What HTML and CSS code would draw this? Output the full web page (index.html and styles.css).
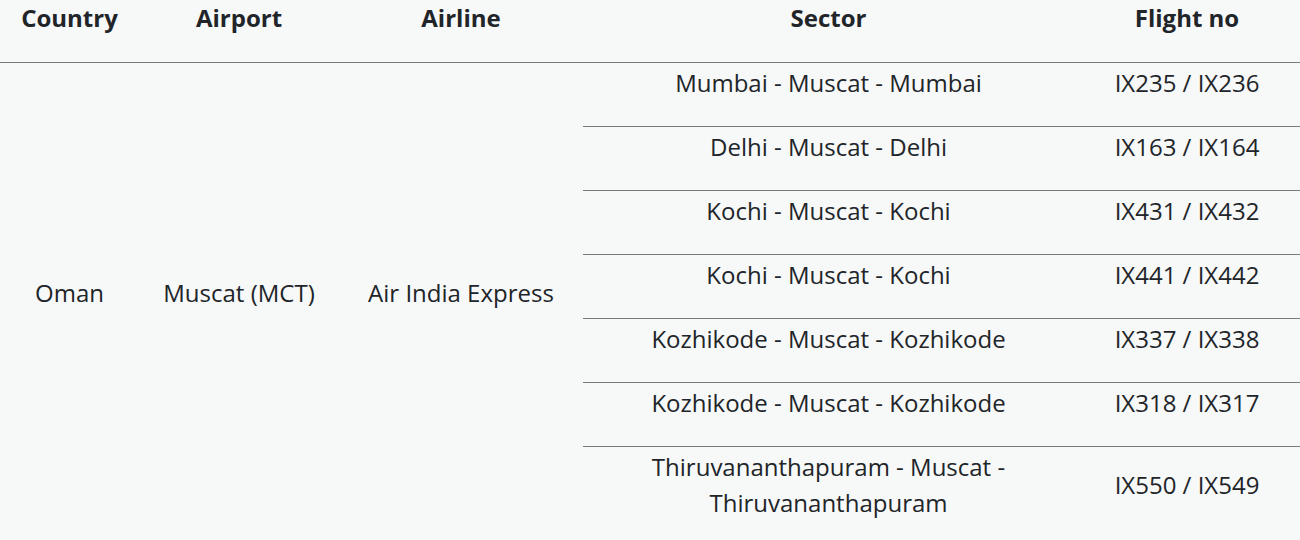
FILE: index.html
```html
<!DOCTYPE html>
<html>
<head>
<meta charset="utf-8">
<link rel="stylesheet" href="styles.css">
</head>
<body>
<table class="flights">
  <colgroup>
    <col class="c-country">
    <col class="c-airport">
    <col class="c-airline">
    <col class="c-sector">
    <col class="c-flight">
  </colgroup>
  <thead>
    <tr>
      <th>Country</th>
      <th>Airport</th>
      <th>Airline</th>
      <th>Sector</th>
      <th>Flight no</th>
    </tr>
  </thead>
  <tbody>
    <tr>
      <td rowspan="7" class="span">Oman</td>
      <td rowspan="7" class="span">Muscat (MCT)</td>
      <td rowspan="7" class="span">Air India Express</td>
      <td>Mumbai - Muscat - Mumbai</td>
      <td class="num">IX235 / IX236</td>
    </tr>
    <tr><td>Delhi - Muscat - Delhi</td><td class="num">IX163 / IX164</td></tr>
    <tr><td>Kochi - Muscat - Kochi</td><td class="num">IX431 / IX432</td></tr>
    <tr><td>Kochi - Muscat - Kochi</td><td class="num">IX441 / IX442</td></tr>
    <tr><td>Kozhikode - Muscat - Kozhikode</td><td class="num">IX337 / IX338</td></tr>
    <tr><td>Kozhikode - Muscat - Kozhikode</td><td class="num">IX318 / IX317</td></tr>
    <tr><td>Thiruvananthapuram - Muscat - Thiruvananthapuram</td><td class="num">IX550 / IX549</td></tr>
  </tbody>
</table>
</body>
</html>
```
FILE: styles.css
```css
html, body {
  margin: 0;
  padding: 0;
  background: #f7f8f8;
}
body {
  font-family: "Open Sans", "Noto Sans", sans-serif;
  color: #212529;
}
.flights {
  width: 1300px;
  border-collapse: collapse;
  table-layout: fixed;
  font-size: 24px;
  line-height: 36px;
}
.c-country { width: 139px; }
.c-airport { width: 200px; }
.c-airline { width: 244px; }
.c-sector { width: 491px; }
.c-flight { width: 226px; }
.flights th {
  font-weight: 700;
  text-align: center;
  padding: 0 4px 26px;
  vertical-align: top;
  border-bottom: 1px solid #7a7a7a;
}
.flights td {
  text-align: center;
  padding: 2px 8px 25px;
  vertical-align: top;
  border-top: 1px solid #7a7a7a;
}
.flights td.span,
.flights td.num {
  vertical-align: middle;
}
.flights td.span {
  white-space: nowrap;
  padding-left: 0;
  padding-right: 0;
}
```
